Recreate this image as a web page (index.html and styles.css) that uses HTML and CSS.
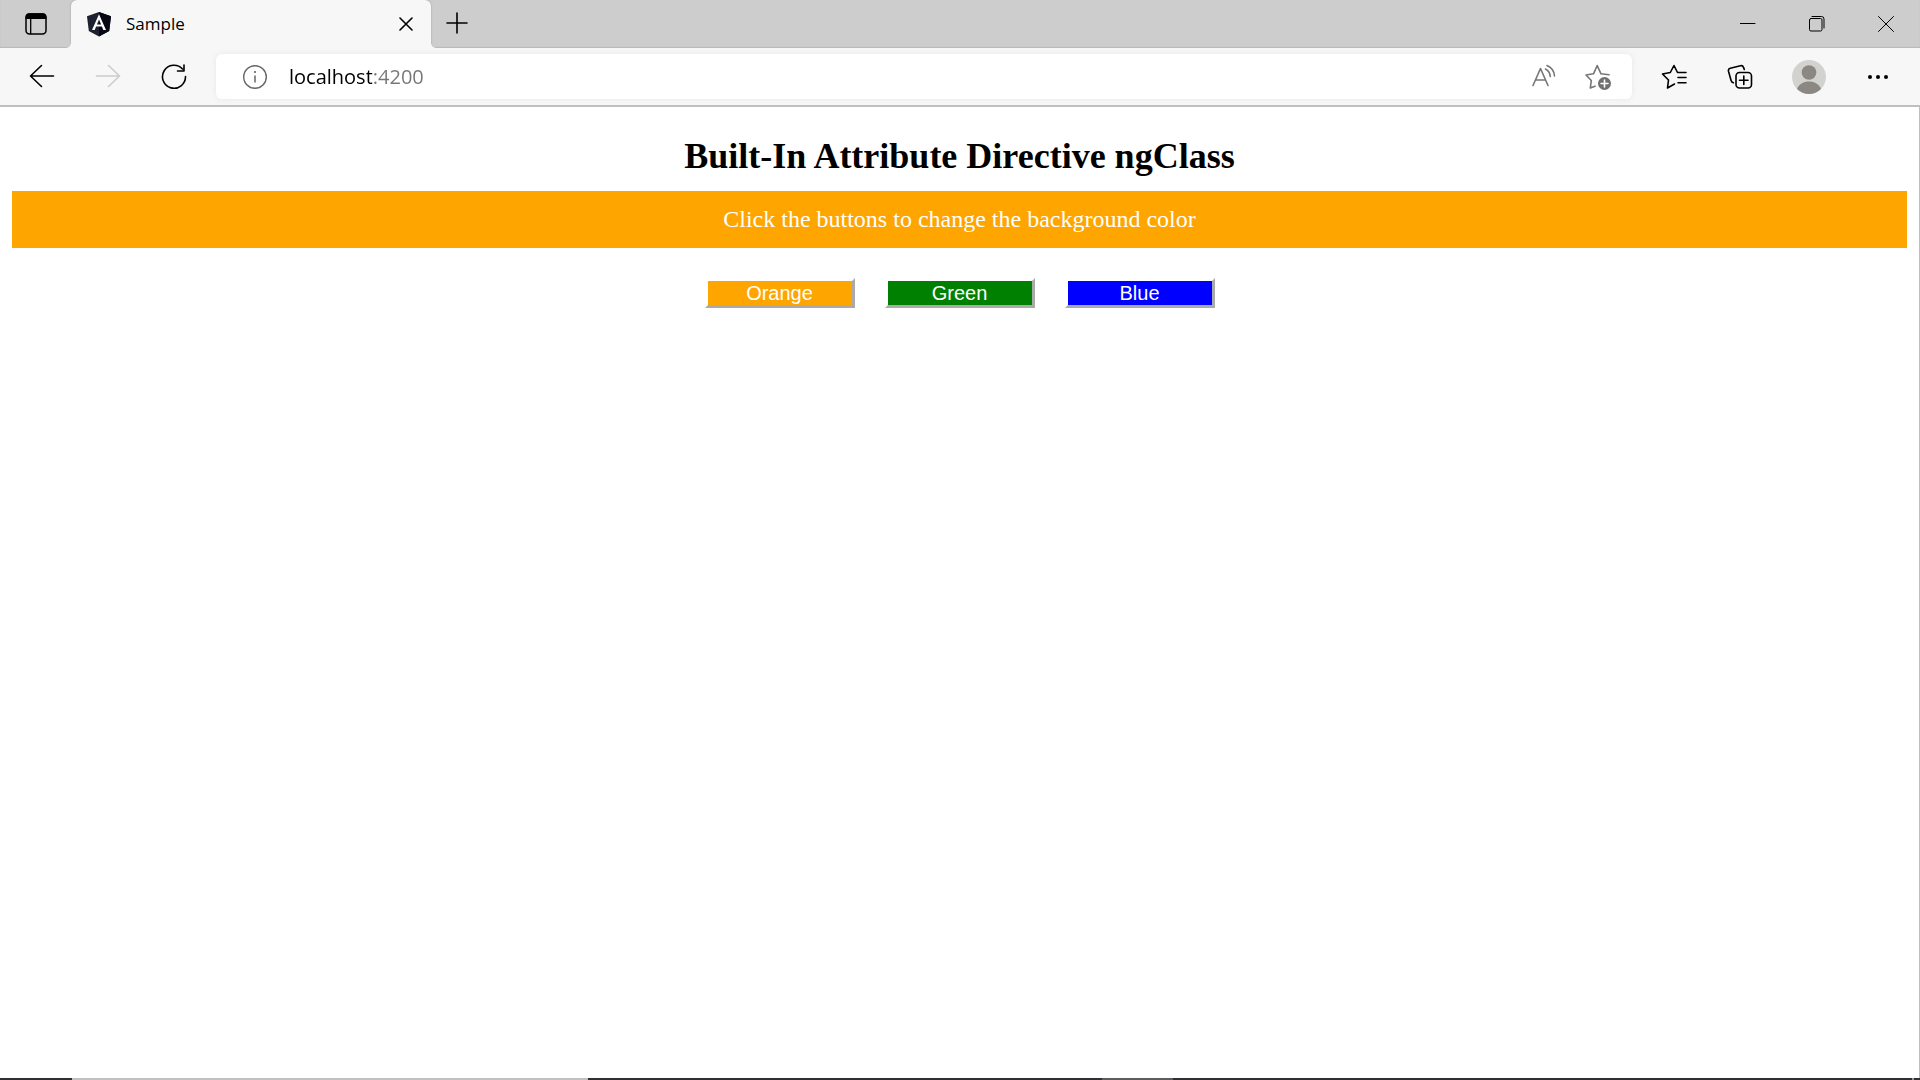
FILE: index.html
```html
<!DOCTYPE html>
<html lang="en">
<head>
<meta charset="utf-8">
<title>Sample</title>
<link rel="stylesheet" href="styles.css">
</head>
<body>
<header class="browser">
  <div class="tab-strip">
    <button class="icon-button tab-actions" aria-label="Tab actions menu">
      <svg width="24" height="24" viewBox="0 0 24 24"><rect x="2" y="2" width="20" height="20" rx="3.5" fill="none" stroke="#000" stroke-width="1.5"/><path d="M1.500 7V5a3.700 3.700 0 0 1 3.700-3.700h13.600A3.700 3.700 0 0 1 22.500 5v2z"/><path d="M6.700 7v15" stroke="#000" stroke-width="1.300"/></svg>
    </button>
    <div class="tab">
      <svg class="favicon" width="26" height="26" viewBox="0 0 26 26"><path d="M13 1L25 5.200 23.200 20 13 25.500 2.800 20 1 5.200z" fill="#1d2130"/><path d="M13 1L25 5.200 23.200 20 13 25.500z" fill="#060914"/><path d="M13 3.300L6 19h2.700l1.400-3.400h5.800L17.300 19H20zm0 5.200l2.100 5h-4.200z" fill="#fff"/></svg>
      <span class="tab-title">Sample</span>
      <button class="icon-button tab-close" aria-label="Close tab">
        <svg width="14" height="14" viewBox="0 0 14 14" class="line"><path d="M1 1l12 12M13 1L1 13"/></svg>
      </button>
    </div>
    <button class="icon-button new-tab" aria-label="New tab">
      <svg width="22" height="24" viewBox="0 0 22 24" class="line"><path d="M11 1v20M1 11h20"/></svg>
    </button>
    <div class="window-controls">
      <button class="icon-button" aria-label="Minimize"><svg width="16" height="16" viewBox="0 0 16 16" class="thin"><path d="M0 7.500h15"/></svg></button>
      <button class="icon-button" aria-label="Restore"><svg width="16" height="16" viewBox="0 0 16 16" class="thin"><rect x=".5" y="2.500" width="12.500" height="12.500" rx="1.500"/><path d="M3 .5h9.500a2.500 2.500 0 0 1 2.500 2.500v9"/></svg></button>
      <button class="icon-button" aria-label="Close"><svg width="16" height="16" viewBox="0 0 16 16" class="thin"><path d="M.5 .5l15 15M15.500 .5l-15 15"/></svg></button>
    </div>
  </div>
  <div class="toolbar">
    <button class="icon-button nav" aria-label="Back"><svg width="26" height="26" viewBox="0 0 26 26" class="line"><path d="M24.500 12H1.500M12.500 1.500L1.500 12l11 10.500"/></svg></button>
    <button class="icon-button nav forward" aria-label="Forward" disabled><svg width="26" height="26" viewBox="0 0 26 26" class="line"><path d="M1.500 12h23M13.500 1.500l11 10.500-11 10.500"/></svg></button>
    <button class="icon-button nav" aria-label="Refresh"><svg width="26" height="26" viewBox="0 0 26 26" class="line"><path d="M24.500 12.500A11.500 11.500 0 1 1 21.500 5M23 1v6h-6.500"/></svg></button>
    <div class="address">
      <button class="icon-button info" aria-label="View site information"><svg width="26" height="26" viewBox="0 0 26 26"><circle cx="13" cy="13" r="11.300" fill="none" stroke="#666" stroke-width="1.400"/><path d="M13 11.500v7" stroke="#666" stroke-width="1.500"/><circle cx="13" cy="8" r="1.100" fill="#666"/></svg></button>
      <input class="url" type="text" value="localhost:4200" aria-label="Address">
      <button class="icon-button page-action" aria-label="Read aloud"><svg width="26" height="26" viewBox="0 0 26 26" class="line"><path d="M2 21.500L9.500 4.500 17 21.500M4.700 16h9.600M14.500 5c3 1.500 4.500 4 4.700 7.500M16 1.500c4.500 2 7.300 5.500 7.500 10.500"/></svg></button>
      <button class="icon-button page-action" aria-label="Add to favorites"><svg width="28" height="28" viewBox="0 0 28 28" class="line"><path d="M11 23.200L6.300 25l1-7.500L2 12l7.500-1.200L13.200 2.500l3.800 8.300 8 1"/><circle cx="20.500" cy="20.500" r="6.500" fill="#707070" stroke="none"/><path d="M20.500 17v7M17 20.500h7" stroke="#fff"/></svg></button>
    </div>
    <button class="icon-button tool" aria-label="Favorites"><svg width="26" height="26" viewBox="0 0 26 26" class="line"><path d="M13.500 20L6.500 24l1-8L1.500 10l7.800-1.500L13 1.500l3.500 7H25M17 13.500h8M17 18.700h8"/></svg></button>
    <button class="icon-button tool" aria-label="Collections"><svg width="26" height="26" viewBox="0 0 26 26" class="line"><rect x="9" y="8.500" width="15.500" height="15.500" rx="3.500"/><path d="M16.800 12v8.500M12.500 16.300H21M17.300 5.500L16.500 3.400a2.500 2.500 0 0 0-3-1.600L3.200 4.300a2.500 2.500 0 0 0-1.700 3l2.600 9.200q.6 2 2.300 2.300"/></svg></button>
    <button class="icon-button tool profile" aria-label="Profile"><svg width="34" height="34" viewBox="0 0 34 34"><circle cx="17" cy="17" r="17" fill="#d2d2ce"/><circle cx="17" cy="12.500" r="7.300" fill="#8b8783"/><path d="M5 29c2-5 6.500-7.500 12-7.500S27 24 29 29a17 17 0 0 1-24 0z" fill="#8b8783"/></svg></button>
    <button class="icon-button tool" aria-label="Settings and more"><svg width="22" height="6" viewBox="0 0 22 6"><circle cx="3" cy="3" r="2"/><circle cx="11" cy="3" r="2"/><circle cx="19" cy="3" r="2"/></svg></button>
  </div>
</header>
<main class="page">
  <h2 class="heading">Built-In Attribute Directive ngClass</h2>
  <div class="banner orange">Click the buttons to change the background color</div>
  <div class="choices">
    <button class="choice orange">Orange</button>
    <button class="choice green">Green</button>
    <button class="choice blue">Blue</button>
  </div>
</main>
<footer class="taskbar"><span class="window-active"></span><span class="window-open"></span><span class="show-desktop"></span></footer>
</body>
</html>
```
FILE: styles.css
```css
* {
  box-sizing: border-box;
}

body {
  margin: 0;
  min-height: 100vh;
  display: flex;
  flex-direction: column;
  background: #fff;
  font-family: "Liberation Serif", "Times New Roman", serif;
}

.browser {
  background: #f7f7f7;
  border-bottom: 2px solid #bfbfbf;
  font-family: "Open Sans", "Noto Sans", sans-serif;
}

.icon-button {
  display: flex;
  align-items: center;
  justify-content: center;
  flex: none;
  padding: 0;
  border: 0;
  background: none;
}

.line,
.thin {
  fill: none;
  stroke: #000;
  stroke-width: 1.6;
  stroke-linecap: round;
  stroke-linejoin: round;
}

.thin {
  stroke-width: 1;
}

.tab-strip {
  display: flex;
  height: 48px;
  background: #cdcdcd;
  box-shadow: inset 0 -1px 1px #b8b8b8;
}

.tab-actions {
  width: 71px;
}

.tab {
  position: relative;
  display: flex;
  align-items: center;
  width: 360px;
  padding: 0 11px 0 15px;
  background: #f7f7f7;
  border-radius: 6px 6px 0 0;
  box-shadow: 0 0 2px #999;
  clip-path: inset(0 -5px);
}

/* Flared feet where the tab meets the toolbar */
.tab::before,
.tab::after {
  content: "";
  position: absolute;
  bottom: 0;
  width: 4px;
  height: 4px;
}

.tab::before {
  right: 100%;
  background: radial-gradient(circle at 0 0, transparent 3px, #f7f7f7 4px);
}

.tab::after {
  left: 100%;
  background: radial-gradient(circle at 100% 0, transparent 3px, #f7f7f7 4px);
}

.tab-title {
  flex: 1;
  padding-left: 14px;
  font-size: 17px;
  line-height: 24px;
}

.tab-close {
  width: 28px;
  height: 28px;
}

.new-tab {
  width: 52px;
}

.window-controls {
  display: flex;
  margin-left: auto;
}

.window-controls .icon-button {
  width: 69px;
}

.toolbar {
  display: flex;
  align-items: center;
  height: 57px;
  padding: 0 9px 0 12px;
}

.nav {
  width: 60px;
  margin-right: 6px;
}

.forward .line {
  stroke: #ccc;
}

.address {
  display: flex;
  flex: 1;
  align-items: center;
  height: 45px;
  margin: 0 9px 0 6px;
  padding: 0 7px 0 12px;
  background: #fff;
  border-radius: 6px;
  box-shadow: 0 0 6px #e8e8e8;
}

.info {
  width: 54px;
}

.url {
  flex: 1;
  min-width: 0;
  padding: 0 0 0 7px;
  border: 0;
  outline: 0;
  font-family: inherit;
  font-size: 20px;
  line-height: 28px;
  color: transparent;
  background: linear-gradient(to right, #000 90px, #767676 90px);
  background-clip: text;
}

.page-action {
  width: 54px;
}

.page-action .line {
  stroke: #767676;
}

.tool {
  width: 66px;
}

.profile {
  width: 72px;
}

.page {
  flex: 1;
  padding: 28px 12px;
  border-right: 1px solid #bfbfbf;
  text-align: center;
}

.heading {
  margin: 0 0 14px;
  font-size: 36px;
  line-height: 42px;
}

.banner {
  padding: 14px;
  color: #fff;
  font-size: 24px;
  line-height: 29px;
}

.choices {
  display: flex;
  justify-content: center;
  gap: 30px;
  margin-top: 30px;
}

.choice {
  width: 150px;
  height: 30px;
  padding: 1px 0 0;
  border: 3px solid;
  border-color: #fff #aaa #aaa #fff;
  color: #fff;
  font-family: "Liberation Sans", Arial, sans-serif;
  font-size: 20px;
  line-height: 23px;
}

.orange {
  background: #ffa500;
}

.green {
  background: #008000;
}

.blue {
  background: #00f;
}

.taskbar {
  display: flex;
  height: 2px;
  padding: 0 6px 0 72px;
  background: #302f31;
}

.window-active {
  width: 516px;
  background: #c0c0c0;
}

.window-open {
  width: 71px;
  margin-left: 514px;
  background: #5c5c5c;
}

.show-desktop {
  width: 2px;
  margin-left: auto;
  background: #999;
}
```
